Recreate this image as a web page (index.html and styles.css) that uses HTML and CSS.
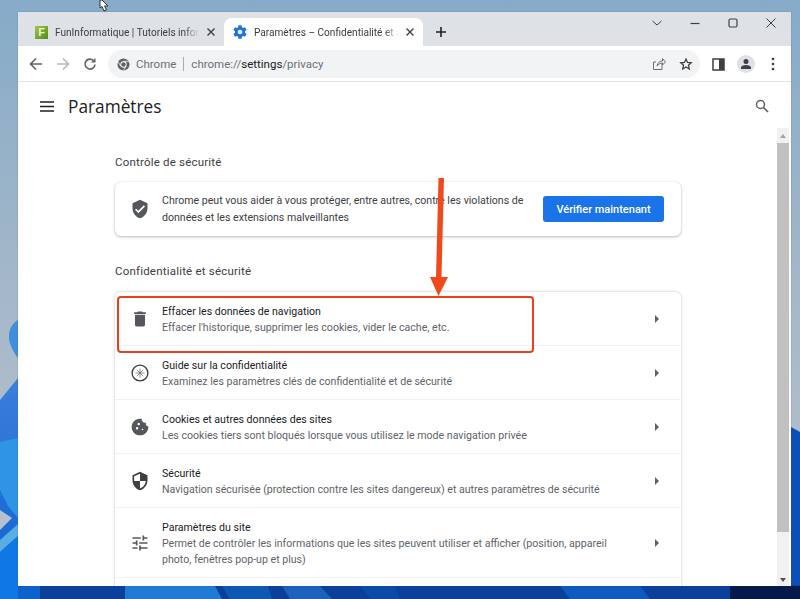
FILE: index.html
```html
<!DOCTYPE html>
<html lang="fr">
<head>
<meta charset="utf-8">
<title>Paramètres – Confidentialité et sécurité</title>
<link rel="stylesheet" href="styles.css">
</head>
<body>
<div class="desktop">
  <svg class="wallpaper" width="800" height="599" viewBox="0 0 800 599">
    <defs>
      <linearGradient id="sky" x1="0" y1="0" x2="0" y2="1"><stop offset="0" stop-color="#86abc8"/><stop offset="0.5" stop-color="#a5b8c9"/><stop offset="1" stop-color="#b9c4cf"/></linearGradient>
      <linearGradient id="blue" x1="0" y1="0" x2="0" y2="1"><stop offset="0" stop-color="#3d7fdc"/><stop offset="1" stop-color="#0a62d0"/></linearGradient>
    </defs>
    <rect width="800" height="599" fill="url(#sky)"/>
    <rect x="0" y="585" width="800" height="14" fill="#0a3f9c"/>
    <polygon points="0,400 18,378 18,599 0,599" fill="url(#blue)"/>
    <polygon points="0,442 18,438 18,518 8,506 0,490" fill="#2f94e4"/>
    <polygon points="0,510 12,518 0,530" fill="#b4c2d0"/>
    <polygon points="0,540 18,524 18,536 0,552" fill="#58aee2"/>
    <polygon points="0,552 18,536 18,599 0,599" fill="#0f78e4"/>
    <path d="M18 320 C8 326 4 340 18 358 Z" fill="#3f8fdc"/>
    <polygon points="791,427 800,432 800,585 791,585" fill="#0b50b8"/>
    <polygon points="18,586 40,586 40,599 18,599" fill="#0c62cc"/>
    <polygon points="125,586 215,586 222,599 125,599" fill="#1f7ad6"/>
    <polygon points="222,586 268,586 272,599 230,599" fill="#0d58b4"/>
    <polygon points="282,586 320,586 332,599 290,599" fill="#1a62bc"/>
    <polygon points="360,586 395,586 400,599 370,599" fill="#0b4aa8"/>
    <polygon points="560,586 640,586 650,599 570,599" fill="#0f5ac0"/>
    <polygon points="730,586 800,586 800,599 730,599" fill="#051a48"/>
  </svg>

  <svg class="cursor" width="14" height="12" viewBox="0 0 14 12"><path d="M1 0V8L3 6.500L5 11L7.500 10L5.500 6H9L3 0Z" fill="#fff" stroke="#333" stroke-width="1"/></svg>

  <div class="window">
    <div class="tabstrip">
      <div class="tab">
        <span class="favicon-f">F</span>
        <span class="tab-title">FunInformatique | Tutoriels infor</span>
        <svg class="tab-close" width="10" height="10" viewBox="0 0 10 10"><path d="M1.500 1.500L8.500 8.500M8.500 1.500L1.500 8.500" stroke="#3c4043" stroke-width="1.400"/></svg>
      </div>
      <div class="tab tab-active">
        <svg class="gear" width="16" height="16" viewBox="0 0 24 24"><path fill="#1a73e8" d="M19.400 13c.04-.33.06-.66.06-1s-.02-.67-.06-1l2.110-1.650c.19-.15.24-.42.12-.64l-2-3.460c-.12-.22-.39-.3-.61-.22l-2.490 1c-.52-.4-1.080-.73-1.690-.98l-.38-2.650A.49.490 0 0 0 14 2h-4c-.25 0-.46.18-.49.420l-.38 2.650c-.61.25-1.170.59-1.690.98l-2.490-1c-.23-.09-.49 0-.61.220l-2 3.460c-.13.220-.07.490.12.640L4.570 11c-.04.330-.07.670-.07 1s.03.670.07 1l-2.110 1.650c-.19.150-.24.420-.12.640l2 3.460c.12.220.39.300.61.220l2.490-1c.52.400 1.080.730 1.690.980l.38 2.650c.03.240.24.420.49.420h4c.25 0 .46-.18.49-.42l.38-2.650c.61-.25 1.170-.59 1.690-.98l2.490 1c.23.090.49 0 .61-.22l2-3.460c.12-.22.07-.49-.12-.64L19.400 13zM12 15.500a3.500 3.500 0 1 1 0-7 3.500 3.500 0 0 1 0 7z"/></svg>
        <span class="tab-title">Paramètres – Confidentialité et sé</span>
        <svg class="tab-close" width="10" height="10" viewBox="0 0 10 10"><path d="M1.500 1.500L8.500 8.500M8.500 1.500L1.500 8.500" stroke="#3c4043" stroke-width="1.400"/></svg>
      </div>
      <svg class="new-tab" width="12" height="12" viewBox="0 0 12 12"><path d="M6 1V11M1 6H11" stroke="#202124" stroke-width="1.600"/></svg>
      <div class="window-controls">
        <svg width="12" height="12" viewBox="0 0 12 12"><path d="M1.500 4L6 8L10.500 4" fill="none" stroke="#3c4043" stroke-width="1"/></svg>
        <svg width="12" height="12" viewBox="0 0 12 12"><path d="M1.500 6.500H10.500" stroke="#3c4043" stroke-width="1.200"/></svg>
        <svg width="12" height="12" viewBox="0 0 12 12"><rect x="2" y="2" width="8" height="8" rx="1.500" fill="none" stroke="#3c4043" stroke-width="1.200"/></svg>
        <svg width="12" height="12" viewBox="0 0 12 12"><path d="M1.500 1.500L10.500 10.500M10.500 1.500L1.500 10.500" stroke="#3c4043" stroke-width="1"/></svg>
      </div>
    </div>

    <div class="toolbar">
      <svg class="nav-icon" width="14" height="14" viewBox="0 0 14 14"><path d="M13 7H2M7 1.500L1.500 7L7 12.500" fill="none" stroke="#5f6368" stroke-width="1.600"/></svg>
      <svg class="nav-icon" width="14" height="14" viewBox="0 0 14 14"><path d="M1 7H12M7 1.500L12.500 7L7 12.500" fill="none" stroke="#b6b8bb" stroke-width="1.600"/></svg>
      <svg class="nav-icon" width="14" height="14" viewBox="0 0 14 14"><path d="M12 7.500A5 5 0 1 1 10.500 3.500" fill="none" stroke="#5f6368" stroke-width="1.600"/><path d="M12.500 1V5.500H8Z" fill="#5f6368"/></svg>
      <div class="omnibox">
        <svg class="chrome-logo" width="13" height="13" viewBox="0 0 14 14"><circle cx="7" cy="7" r="6.500" fill="#5f6368"/><circle cx="7" cy="7" r="3.400" fill="#fff"/><circle cx="7" cy="7" r="2.400" fill="#5f6368"/><path d="M7 3.600H13M4 8.800L1.200 4M9.900 8.800L7 13.400" stroke="#fff" stroke-width="0.800"/></svg>
        <span class="omni-chip">Chrome</span>
        <span class="omni-sep"></span>
        <span class="omni-url">chrome://<b>settings</b>/privacy</span>
        <svg class="omni-share" width="14" height="14" viewBox="0 0 14 14"><path d="M10 6.500V12.500H1.500V5H4M5 9C5.500 5.500 8 4 10.500 4V1.500L13.500 5L10.500 8V6C8.500 6 6.500 7 5 9Z" fill="none" stroke="#6d7175" stroke-width="1"/></svg>
        <svg class="omni-star" width="14" height="14" viewBox="0 0 24 24"><path d="M12 3.500L14.600 9.300L21 10L16.200 14.200L17.600 20.500L12 17.200L6.400 20.500L7.800 14.200L3 10L9.400 9.300Z" fill="none" stroke="#3c4043" stroke-width="2.200"/></svg>
      </div>
      <svg class="side-panel" width="13" height="13" viewBox="0 0 13 13"><rect x="1" y="1" width="11" height="11" fill="none" stroke="#3c4043" stroke-width="1.500"/><rect x="7" y="1" width="5" height="11" fill="#3c4043"/></svg>
      <div class="avatar"><svg width="12" height="12" viewBox="0 0 12 12"><circle cx="6" cy="3.500" r="2.500" fill="#3c4043"/><path d="M1 11V9.500C1 8 3.500 7 6 7S11 8 11 9.500V11Z" fill="#3c4043"/></svg></div>
      <svg class="kebab" width="4" height="14" viewBox="0 0 4 14"><circle cx="2" cy="2" r="1.300" fill="#3c4043"/><circle cx="2" cy="7" r="1.300" fill="#3c4043"/><circle cx="2" cy="12" r="1.300" fill="#3c4043"/></svg>
    </div>

    <div class="content">
      <div class="settings">
        <header class="page-header">
          <svg class="menu" width="14" height="11" viewBox="0 0 14 11"><path d="M0 1H14M0 5.500H14M0 10H14" stroke="#202124" stroke-width="1.500"/></svg>
          <h1>Paramètres</h1>
          <svg class="search" width="14" height="14" viewBox="0 0 14 14"><circle cx="5.500" cy="5.500" r="4" fill="none" stroke="#5f6368" stroke-width="1.500"/><path d="M8.500 8.500L13 13" stroke="#5f6368" stroke-width="1.700"/></svg>
        </header>

        <h2 class="section-title title-first">Contrôle de sécurité</h2>
        <section class="card safety">
          <svg class="row-icon" width="20" height="20" viewBox="0 0 24 24"><path fill="#54575b" d="M12 1L3 5v6c0 5.550 3.840 10.740 9 12 5.160-1.260 9-6.450 9-12V5l-9-4zm-2 16l-4-4 1.410-1.410L10 14.170l6.590-6.590L18 9l-8 8z"/></svg>
          <p class="safety-text">Chrome peut vous aider à vous protéger, entre autres, contre les violations de données et les extensions malveillantes</p>
          <button class="check-btn">Vérifier maintenant</button>
        </section>

        <h2 class="section-title title-second">Confidentialité et sécurité</h2>
        <section class="card list">
          <div class="row">
            <svg class="row-icon" width="20" height="20" viewBox="0 0 24 24"><path fill="#54575b" d="M6 19c0 1.100.9 2 2 2h8c1.100 0 2-.9 2-2V7H6v12zM19 4h-3.500l-1-1h-5l-1 1H5v2h14V4z"/></svg>
            <div class="row-text"><div class="row-title">Effacer les données de navigation</div><div class="row-sub">Effacer l'historique, supprimer les cookies, vider le cache, etc.</div></div>
            <span class="row-arrow"></span>
          </div>
          <div class="row">
            <svg class="row-icon" width="20" height="20" viewBox="0 0 20 20"><circle cx="10" cy="10" r="7.900" fill="none" stroke="#3c4043" stroke-width="1.400"/><path d="M10 5.500V14.500M5.500 10H14.500M6.800 6.800L13.200 13.200M13.200 6.800L6.800 13.200" stroke="#6d7175" stroke-width="0.800"/></svg>
            <div class="row-text"><div class="row-title">Guide sur la confidentialité</div><div class="row-sub">Examinez les paramètres clés de confidentialité et de sécurité</div></div>
            <span class="row-arrow"></span>
          </div>
          <div class="row">
            <svg class="row-icon" width="20" height="20" viewBox="0 0 24 24"><path fill="#54575b" d="M21.950 10.990c-1.790-.03-3.700-1.950-2.680-4.220-2.970 1-5.780-1.590-5.190-4.560C7.110.74 2 6.410 2 12c0 5.520 4.480 10 10 10 5.890 0 10.540-5.080 9.950-11.010zM8.500 15a1.500 1.500 0 1 1 0-3 1.500 1.500 0 0 1 0 3zm2-5a1.500 1.500 0 1 1 0-3 1.500 1.500 0 0 1 0 3zm4.500 6a1 1 0 1 1 0-2 1 1 0 0 1 0 2z"/></svg>
            <div class="row-text"><div class="row-title">Cookies et autres données des sites</div><div class="row-sub">Les cookies tiers sont bloqués lorsque vous utilisez le mode navigation privée</div></div>
            <span class="row-arrow"></span>
          </div>
          <div class="row">
            <svg class="row-icon" width="20" height="20" viewBox="0 0 24 24"><path fill="#3c4043" d="M12 1L3 5v6c0 5.550 3.840 10.740 9 12 5.160-1.260 9-6.450 9-12V5l-9-4zm0 10.990h7c-.53 4.120-3.280 7.790-7 8.940V12H5V6.300l7-3.110v8.800z"/></svg>
            <div class="row-text"><div class="row-title">Sécurité</div><div class="row-sub">Navigation sécurisée (protection contre les sites dangereux) et autres paramètres de sécurité</div></div>
            <span class="row-arrow"></span>
          </div>
          <div class="row row-tall">
            <svg class="row-icon" width="20" height="20" viewBox="0 0 24 24"><path fill="#54575b" d="M3 17v2h6v-2H3zM3 5v2h10V5H3zm10 16v-2h8v-2h-8v-2h-2v6h2zM7 9v2H3v2h4v2h2V9H7zm14 4v-2H11v2h10zm-6-4h2V7h4V5h-4V3h-2v6z"/></svg>
            <div class="row-text"><div class="row-title">Paramètres du site</div><div class="row-sub">Permet de contrôler les informations que les sites peuvent utiliser et afficher (position, appareil photo, fenêtres pop-up et plus)</div></div>
            <span class="row-arrow"></span>
          </div>
          <div class="row row-cut"></div>
        </section>
      </div>
      <div class="scrollbar">
        <span class="sb-up"></span>
        <div class="sb-thumb"></div>
        <div class="sb-track"></div>
        <span class="sb-down"></span>
      </div>
    </div>
  </div>

  <div class="highlight"></div>
  <svg class="arrow" width="20" height="119" viewBox="0 0 20 119"><path d="M9.500 0H15L12.500 99H19L9.500 118L1 99H7Z" fill="#f04a1c"/></svg>
</div>
</body>
</html>
```
FILE: styles.css
```css
* { box-sizing: border-box; }
html, body { margin: 0; padding: 0; }
body { width: 800px; height: 599px; overflow: hidden; font-family: Roboto, "Open Sans", sans-serif; color: #202124; }
.desktop { position: relative; width: 800px; height: 599px; overflow: hidden; }
.wallpaper { position: absolute; left: 0; top: 0; }
.cursor { position: absolute; left: 99px; top: 0; }

.window { position: absolute; left: 18px; top: 12px; width: 773px; height: 574px; background: #fff; display: flex; flex-direction: column; box-shadow: 0 0 1px rgba(60,80,100,.6); }

.tabstrip { height: 34px; background: #dee1e6; display: flex; align-items: flex-end; padding-left: 8px; flex: none; position: relative; }
.tab { width: 198px; height: 28px; display: flex; align-items: center; padding: 0 8px 0 9px; gap: 7px; font-size: 10.100px; color: #3c4043; }
.tab-active { width: 199px; background: #fff; border-radius: 8px 8px 0 0; padding-left: 8px; gap: 6px; }
.favicon-f { width: 13px; height: 13px; background: linear-gradient(135deg, #a2c84c, #4f8a1a); color: #e9f3c8; font: bold 11px/13px "Liberation Sans", sans-serif; text-align: center; flex: none; }
.gear { flex: none; }
.tab-title { flex: 1; white-space: nowrap; min-width: 0; -webkit-mask-image: linear-gradient(to right, #000 90%, transparent); mask-image: linear-gradient(to right, #000 90%, transparent); }
.tab-close { flex: none; }
.new-tab { margin: 0 0 8px 12px; flex: none; }
.window-controls { position: absolute; right: 14px; top: 5px; display: flex; gap: 26px; }

.toolbar { height: 36px; background: #fff; display: flex; align-items: center; flex: none; border-bottom: 1px solid #e3e4e6; padding-top: 1px; }
.nav-icon { flex: none; margin-left: 11px; }
.nav-icon + .nav-icon { margin-left: 13px; }
.omnibox { margin-left: 11px; flex: 1; height: 28px; background: #f1f3f4; border-radius: 14px; display: flex; align-items: center; padding: 0 0 0 9px; font-size: 11.500px; color: #5f6368; white-space: nowrap; min-width: 0; }
.chrome-logo { flex: none; margin-right: 6px; }
.omni-chip { color: #6d7175; }
.omni-sep { width: 1px; height: 14px; background: #a8abae; margin: 0 7px; }
.omni-url { flex: 1; color: #6d7175; }
.omni-url b { font-weight: 400; color: #202124; }
.omni-share { margin-right: 13px; flex: none; }
.omni-star { margin-right: 7px; flex: none; }
.side-panel { margin-left: 12px; flex: none; }
.avatar { margin-left: 12px; width: 18px; height: 18px; border-radius: 50%; background: #dfe1e5; display: flex; align-items: center; justify-content: center; flex: none; }
.kebab { margin: 0 16px 0 16px; flex: none; }

.content { flex: 1; min-height: 0; display: flex; overflow: hidden; }
.settings { flex: 1; min-width: 0; padding-left: 97px; padding-right: 96px; overflow: hidden; position: relative; }
.page-header { position: absolute; left: 0; right: 0; top: 0; height: 48px; display: flex; align-items: center; padding: 0 0 0 22px; }
.page-header h1 { margin: 2px 0 0 14px; font-family: "Open Sans", sans-serif; font-size: 17.300px; font-weight: 500; line-height: 48px; flex: 1; color: #202124; }
.search { margin-right: 8px; }

.section-title { margin: 0; font-size: 11.500px; font-weight: 400; letter-spacing: .2px; color: #3c4043; line-height: 16px; }
.title-first { padding-top: 72px; margin-bottom: 12px; box-sizing: content-box; }
.title-second { margin-top: 27px; margin-bottom: 13px; }

.card { background: #fff; border-radius: 6px; box-shadow: 0 1px 3px rgba(60,64,67,.35), 0 0 1px rgba(60,64,67,.18); }
.safety { height: 54px; display: flex; align-items: center; padding: 0 17px 0 15px; }
.safety-text { margin: 0 0 0 12px; width: 375px; flex: none; font-size: 10.600px; line-height: 17px; color: #3c4043; }
.check-btn { margin-left: auto; width: 121px; height: 26px; background: #1a73e8; color: #fff; border: 0; border-radius: 3px; font: 500 11px Roboto, sans-serif; padding: 0; }

.list { height: 320px; box-shadow: 0 0 3px rgba(60,64,67,.3); }
.row { height: 54px; display: flex; align-items: center; padding: 0 22px 0 15px; border-bottom: 1px solid #f1f1f1; }
.row-tall { height: 70px; }
.row-cut { height: 30px; border-bottom: 0; }
.row-icon { flex: none; }
.row-text { margin-left: 12px; padding-top: 1px; flex: 1; min-width: 0; }
.row-title { font-size: 10.600px; line-height: 17px; color: #202124; }
.row-sub { font-size: 10.600px; line-height: 16px; color: #5f6368; width: 455px; }
.row-arrow { width: 0; height: 0; border-left: 4px solid #5f6368; border-top: 4px solid transparent; border-bottom: 4px solid transparent; flex: none; }

.scrollbar { width: 12px; margin: 46px 2px 0 0; flex: none; display: flex; flex-direction: column; background: #f1f1f1; position: relative; }
.sb-up { height: 15px; flex: none; position: relative; }
.sb-up::after { content: ""; position: absolute; left: 3px; top: 6px; width: 0; height: 0; border-bottom: 4px solid #a3a3a3; border-left: 3px solid transparent; border-right: 3px solid transparent; }
.sb-thumb { height: 389px; flex: none; background: #c1c1c1; }
.sb-track { flex: 1; }
.sb-down { position: absolute; left: 3px; bottom: 4px; width: 0; height: 0; border-top: 4px solid #505050; border-left: 3px solid transparent; border-right: 3px solid transparent; }

.highlight { position: absolute; left: 117px; top: 296px; width: 417px; height: 57px; border: 2px solid #e8421a; border-radius: 4px; }
.arrow { position: absolute; left: 429px; top: 178px; }
```
